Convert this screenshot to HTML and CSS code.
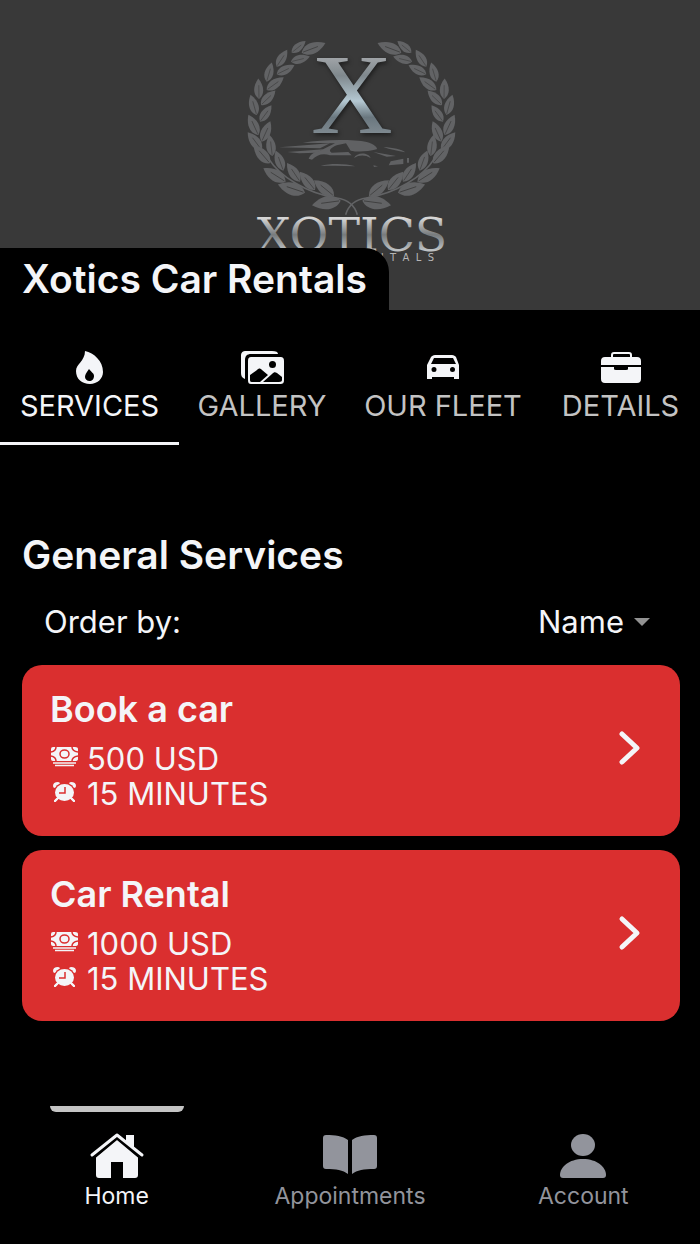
FILE: index.html
```html
<!DOCTYPE html>
<html lang="en">
<head>
<meta charset="utf-8">
<meta name="viewport" content="width=device-width, initial-scale=1">
<title>Xotics Car Rentals</title>
<link rel="stylesheet" href="styles.css">
</head>
<body>
<header class="banner">
  <svg class="logo" viewBox="0 0 780 720" role="img" aria-label="Xotics Rentals logo">
    <defs>
      <linearGradient id="steel" x1="0" y1="0" x2="0" y2="1">
        <stop offset="0.1" stop-color="#b9b9bb"/>
        <stop offset="0.35" stop-color="#7f888d"/>
        <stop offset="0.55" stop-color="#b4c8d2"/>
        <stop offset="0.68" stop-color="#6a777f"/>
        <stop offset="0.9" stop-color="#8d969c"/>
      </linearGradient>
      <linearGradient id="chrome" x1="0" y1="0" x2="0" y2="1">
        <stop offset="0.2" stop-color="#d5d5d5"/>
        <stop offset="0.5" stop-color="#777b7d"/>
        <stop offset="0.8" stop-color="#c2c6c8"/>
      </linearGradient>
      <g id="leaf">
        <path d="M0 0C-20-14-20-42 0-68C20-42 20-14 0 0Z"/>
        <path d="M0-4L1-46" stroke="#3d3d3d" stroke-width="2"/>
      </g>
      <g id="branch" fill="#626365">
        <use href="#leaf" transform="translate(245 68) rotate(68) scale(1.13)"/>
        <use href="#leaf" transform="translate(215 68) rotate(50) scale(.8)"/>
        <use href="#leaf" transform="translate(213 95) rotate(75) scale(.86)"/>
        <use href="#leaf" transform="translate(170 110) rotate(32) scale(.88)"/>
        <use href="#leaf" transform="translate(170 133) rotate(63) scale(.88)"/>
        <use href="#leaf" transform="translate(140 155) rotate(15) scale(.88)"/>
        <use href="#leaf" transform="translate(140 180) rotate(53) scale(.94)"/>
        <use href="#leaf" transform="translate(117 207) rotate(-2) scale(.9)"/>
        <use href="#leaf" transform="translate(123 225) rotate(45) scale(.9)"/>
        <use href="#leaf" transform="translate(110 255) rotate(-17) scale(.93)"/>
        <use href="#leaf" transform="translate(120 275) rotate(35) scale(.88)"/>
        <use href="#leaf" transform="translate(115 315) rotate(-26) scale(1)"/>
        <use href="#leaf" transform="translate(125 335) rotate(23) scale(.98)"/>
        <use href="#leaf" transform="translate(125 360) rotate(-38) scale(1)"/>
        <use href="#leaf" transform="translate(157 378) rotate(-8) scale(.95)"/>
        <use href="#leaf" transform="translate(150 400) rotate(-42) scale(1.08)"/>
        <use href="#leaf" transform="translate(190 422) rotate(-21) scale(.95)"/>
        <use href="#leaf" transform="translate(197 455) rotate(-59) scale(1.15)"/>
        <use href="#leaf" transform="translate(240 455) rotate(-35) scale(1)"/>
        <use href="#leaf" transform="translate(255 488) rotate(-73) scale(1.25)"/>
        <use href="#leaf" transform="translate(285 480) rotate(-40) scale(1.05)"/>
        <use href="#leaf" transform="translate(342 498) rotate(-52) scale(1.12)"/>
        <use href="#leaf" transform="translate(362 512) rotate(-99) scale(1.28)"/>
        <path d="M412 554C402 520 380 508 350 504C260 490 180 440 145 385" fill="none" stroke="#626365" stroke-width="5"/>
      </g>
    </defs>
    <use href="#branch"/>
    <use href="#branch" transform="translate(789 0) scale(-1 1)"/>
    <g fill="#606163">
      <path d="M178 352L330 340L300 355Z"/>
      <path d="M202 366L310 358L290 368L238 370Z"/>
      <path d="M248 338C310 328 400 328 440 336C462 342 475 354 470 358C440 366 410 366 392 362L378 340L350 346C335 352 322 362 335 368L385 366L395 376L330 376C310 368 290 374 276 389L266 386C272 370 285 365 300 362L345 340Z"/>
      <path d="M402 384C410 366 445 366 452 384C435 374 418 374 402 384Z"/>
      <path d="M460 366L528 378L500 380Z"/>
      <path d="M490 351C520 353 545 358 556 367C535 362 510 359 490 351Z"/>
      <path d="M302 408C330 400 375 400 406 409C370 407 335 407 302 408Z"/>
      <path d="M512 394L550 386V402L506 406Z"/>
      <path d="M561 384H567V398H561Z"/>
      <path d="M460 406L474 409L462 411Z"/>
    </g>
    <text class="logo-initial" x="396" y="308" text-anchor="middle" fill="url(#steel)">X</text>
    <text class="logo-name" x="396" y="664" text-anchor="middle" fill="url(#chrome)">XOTICS</text>
    <text class="logo-sub" x="642" y="694" text-anchor="end" fill="#b5b5b5">R  E  N  T  A  L  S</text>
  </svg>
  <h1 class="shop-name">Xotics Car Rentals</h1>
</header>

<nav class="tabs" aria-label="Sections">
  <a class="tab tab-active" href="#services" aria-current="page">
    <svg class="tab-icon" viewBox="0 0 44 36" aria-hidden="true"><path fill="currentColor" fill-rule="evenodd" d="M17 2C26 4 35 12 35 23C35 30 29 35 22 35C14 35 8 30 8 22C8 15 17 12 17 2ZM21 20C18 24 17 26 17 28C17 30 19 32 21.500 32C24 32 26 30 26 27C26 24 24 24 21 20Z"/></svg>
    <span>SERVICES</span>
  </a>
  <a class="tab" href="#gallery">
    <svg class="tab-icon" viewBox="0 0 44 36" aria-hidden="true"><path fill="currentColor" d="M5 30C2 29 1 27 1 24V7C1 3 3 2 6 2H32C36 2 38 3 38 5H11C7 5 5 7 5 11Z"/><path fill="currentColor" fill-rule="evenodd" d="M11 8H40C43 8 44 9 44 12V31C44 34 43 35 40 35H11C9 35 8 34 8 31V12C8 9 9 8 11 8ZM10 31C10 33 11 33 13 33H20L28 26L22 21C20 19 19 19 17 21L10 26ZM23 33H39C41 33 42 32 42 31V28L37 24C35 23 34 23 32 25ZM32.500 12A3.500 3.500 0 1 0 32.500 19A3.500 3.500 0 1 0 32.500 12Z"/></svg>
    <span>GALLERY</span>
  </a>
  <a class="tab" href="#fleet">
    <svg class="tab-icon" viewBox="0 0 44 36" aria-hidden="true"><path fill="currentColor" fill-rule="evenodd" d="M10 8C11 7 12 6 14 6H31C33 6 34 7 35 8L38 16V30H33V28H11V30H6V16ZM13 9L10 15H35L32 9ZM13 18A2.500 2.500 0 1 0 13 23A2.500 2.500 0 1 0 13 18ZM31.500 18A2.500 2.500 0 1 0 31.500 23A2.500 2.500 0 1 0 31.500 18Z"/></svg>
    <span>OUR FLEET</span>
  </a>
  <a class="tab" href="#details">
    <svg class="tab-icon" viewBox="0 0 44 36" aria-hidden="true"><path fill="none" stroke="currentColor" stroke-width="2" d="M13 9V6Q13 4 15 4H30Q32 4 32 6V9"/><path fill="currentColor" d="M2 16V12Q2 8 6 8H38Q42 8 42 12V16ZM2 18H15V20Q15 21 17 21H27Q29 21 29 20V18H42V30Q42 34 38 34H6Q2 34 2 30Z"/></svg>
    <span>DETAILS</span>
  </a>
</nav>

<main class="services" id="services">
  <h2 class="section-title">General Services</h2>
  <div class="order">
    <label for="order">Order by:</label>
    <div class="order-field">
      <select class="order-select" id="order"><option>Name</option></select>
      <svg class="order-arrow" viewBox="0 0 16 8" aria-hidden="true"><path fill="#929292" d="M0 0H16L8 8Z"/></svg>
    </div>
  </div>

  <a class="card" href="#book-a-car">
    <div>
      <h3 class="card-title">Book a car</h3>
      <p class="card-row"><svg class="card-icon" viewBox="0 0 28 24" aria-hidden="true"><use href="#cash"/></svg>500 USD</p>
      <p class="card-row"><svg class="card-icon" viewBox="0 0 28 24" aria-hidden="true"><use href="#alarm"/></svg>15 MINUTES</p>
    </div>
    <svg class="chevron" viewBox="0 0 24 36" aria-hidden="true"><use href="#chevron"/></svg>
  </a>
  <a class="card" href="#car-rental">
    <div>
      <h3 class="card-title">Car Rental</h3>
      <p class="card-row"><svg class="card-icon" viewBox="0 0 28 24" aria-hidden="true"><use href="#cash"/></svg>1000 USD</p>
      <p class="card-row"><svg class="card-icon" viewBox="0 0 28 24" aria-hidden="true"><use href="#alarm"/></svg>15 MINUTES</p>
    </div>
    <svg class="chevron" viewBox="0 0 24 36" aria-hidden="true"><use href="#chevron"/></svg>
  </a>
</main>

<nav class="bottom-nav" aria-label="Main">
  <a class="nav-item nav-active" href="#home" aria-current="page">
    <svg class="nav-icon" viewBox="0 0 56 48" aria-hidden="true"><path fill="currentColor" d="M7 25L28 7L49 25V43Q49 46 46 46H34V30H22V46H10Q7 46 7 43Z"/><path fill="currentColor" d="M37 3H45V16L37 9Z"/><path fill="none" stroke="#000" stroke-width="3" d="M4 26L28 6L52 26"/><path fill="none" stroke="currentColor" stroke-width="3" stroke-linecap="round" stroke-linejoin="round" d="M3 23L28 3L53 23"/></svg>
    <span>Home</span>
  </a>
  <a class="nav-item" href="#appointments">
    <svg class="nav-icon" viewBox="0 0 56 48" aria-hidden="true"><path fill="currentColor" d="M26 8C21 4 13 3 4 3Q1 3 1 6V34Q1 37 4 37C14 37 21 38 26 42ZM30 8C35 4 43 3 52 3Q55 3 55 6V34Q55 37 52 37C42 37 35 38 30 42Z"/></svg>
    <span>Appointments</span>
  </a>
  <a class="nav-item" href="#account">
    <svg class="nav-icon" viewBox="0 0 56 48" aria-hidden="true"><ellipse cx="28" cy="13" rx="12" ry="11" fill="currentColor"/><path fill="currentColor" d="M28 27C42 27 51 35 51 43Q51 46 48 46H8Q5 46 5 43C5 35 14 27 28 27Z"/></svg>
    <span>Account</span>
  </a>
</nav>

<svg class="symbols" aria-hidden="true">
  <defs>
    <g id="cash">
      <path fill="#f4f5f8" d="M3 0H25Q28 0 28 2V12Q28 14 25 14H3Q1 14 1 12V2Q1 0 3 0Z"/>
      <path fill="none" stroke="#da2f2f" stroke-width="1.500" d="M1 5Q6 4 6 0M22 0Q22 4 28 5M1 9Q6 10 6 14M22 14Q22 10 28 9"/>
      <ellipse cx="14.500" cy="7" rx="4.500" ry="4" fill="none" stroke="#da2f2f" stroke-width="1.500"/>
      <path stroke="#f4f5f8" stroke-width="1.500" d="M3 16H26M5 18.500H24"/>
    </g>
    <g id="alarm">
      <g fill="none" stroke="#f4f5f8" stroke-linecap="round">
        <path stroke-width="4" d="M5 4Q5 2 8 2M21 2Q24 2 24 4"/>
        <path stroke-width="2" d="M8 16L5 19M21 16L24 19"/>
      </g>
      <ellipse cx="14.500" cy="10" rx="10.500" ry="9.500" fill="#da2f2f"/>
      <ellipse cx="14.500" cy="10.500" rx="9.500" ry="8.500" fill="#f4f5f8"/>
      <path stroke="#f4f5f8" stroke-width="2" stroke-linecap="round" d="M8 16L5 19M21 16L24 19"/>
      <path fill="none" stroke="#da2f2f" stroke-width="1.500" d="M15 5V11H9"/>
    </g>
    <path id="chevron" fill="none" stroke="#f4f5f8" stroke-width="5" stroke-linecap="round" stroke-linejoin="round" d="M4 4L19 18L4 32"/>
  </defs>
</svg>
</body>
</html>
```
FILE: styles.css
```css
* {
  box-sizing: border-box;
}

body {
  margin: 0;
  min-height: 100vh;
  display: flex;
  flex-direction: column;
  background: #000;
  color: #f4f5f8;
  font-family: Inter, Roboto, sans-serif;
  font-size: 31px;
}

h1, h2, h3, p {
  margin: 0;
}

a {
  color: inherit;
  text-decoration: none;
}

.banner {
  position: relative;
  display: flex;
  justify-content: center;
  padding: 30px 0 40px;
  background: #393939;
}

.logo {
  display: block;
  width: 260px;
  height: 240px;
}

.logo-initial {
  font: 340px "Liberation Serif", serif;
  filter: drop-shadow(4px 6px 6px #1c1c1c);
}

.logo-name {
  font: 142px "DejaVu Serif", serif;
}

.logo-sub {
  font: 30px "DejaVu Sans", sans-serif;
  white-space: pre;
}

.shop-name {
  position: absolute;
  left: 0;
  bottom: 0;
  padding: 8px 22px;
  border-top-right-radius: 24px;
  background: #000;
  font-size: 39px;
  font-weight: 600;
  line-height: 46px;
}

.tabs {
  display: grid;
  grid-template-columns: 179fr 166fr 196fr 159fr;
}

.tab {
  display: flex;
  flex-direction: column;
  align-items: center;
  gap: 4px;
  padding: 39px 0 19px;
  border-bottom: 3px solid transparent;
  font-size: 29px;
  line-height: 34px;
}

.tab span {
  color: #c3c3c3;
}

.tab-active {
  border-bottom-color: #f4f5f8;
}

.tab-active span {
  color: #f4f5f8;
}

.tab-icon {
  width: 44px;
  height: 36px;
}

.services {
  flex: 1;
  padding: 86px 20px 60px 22px;
}

.section-title {
  font-size: 39px;
  font-weight: 600;
  line-height: 48px;
}

.order {
  display: flex;
  align-items: center;
  justify-content: space-between;
  padding: 22px 30px 22px 22px;
  line-height: 42px;
}

.order-field {
  display: flex;
  align-items: center;
  gap: 10px;
}

.order-select {
  appearance: none;
  padding: 0;
  border: 0;
  background: transparent;
  color: inherit;
  font: inherit;
}

.order-arrow {
  width: 16px;
  height: 8px;
}

.card {
  display: flex;
  align-items: center;
  justify-content: space-between;
  margin-bottom: 14px;
  padding: 20px 38px 25px 28px;
  border-radius: 20px;
  background: #da2f2f;
}

.card-title {
  margin-bottom: 8px;
  font-size: 36px;
  font-weight: 600;
  line-height: 48px;
}

.card-row {
  display: flex;
  align-items: center;
  gap: 9px;
  line-height: 35px;
}

.card-icon {
  width: 28px;
  height: 24px;
}

.chevron {
  width: 24px;
  height: 36px;
}

.bottom-nav {
  display: grid;
  grid-template-columns: repeat(3, 1fr);
}

.nav-item {
  display: flex;
  flex-direction: column;
  align-items: center;
  gap: 2px;
  padding-bottom: 34px;
  color: #92949c;
  font-size: 23px;
  line-height: 28px;
}

.nav-item::before {
  content: "";
  width: 134px;
  height: 6px;
  margin-bottom: 18px;
  border-radius: 0 0 6px 6px;
}

.nav-active {
  color: #f4f5f8;
}

.nav-active::before {
  background: #c4c4c4;
}

.nav-icon {
  width: 56px;
  height: 48px;
}

.symbols {
  position: absolute;
  width: 0;
  height: 0;
}
```
